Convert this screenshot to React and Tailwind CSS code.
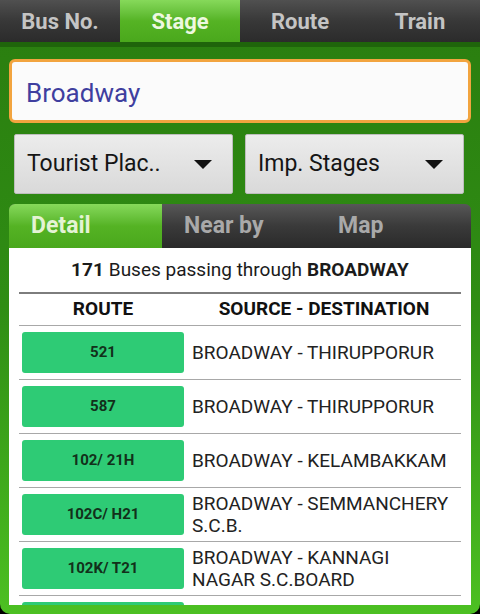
const topTabs = ['Bus No.', 'Stage', 'Route', 'Train']

const rows = [
  { route: '521', dest: 'BROADWAY - THIRUPPORUR' },
  { route: '587', dest: 'BROADWAY - THIRUPPORUR' },
  { route: '102/ 21H', dest: 'BROADWAY - KELAMBAKKAM' },
  { route: '102C/ H21', dest: 'BROADWAY - SEMMANCHERY S.C.B.' },
  { route: '102K/ T21', dest: 'BROADWAY - KANNAGI NAGAR S.C.BOARD' },
  // next row is only peeking out below the fold
  { route: '', dest: '' },
]

function Caret() {
  return (
    <svg width="18" height="9" viewBox="0 0 18 9" className="shrink-0">
      <path d="M0 0 L18 0 L9 9 Z" fill="#111" />
    </svg>
  )
}

function Dropdown({ label }) {
  return (
    <div className="w-[219px] h-[60px] flex items-center justify-between pl-3 pr-5 rounded-[2px] border border-[#bdbdbd] bg-gradient-to-b from-[#ececec] to-[#d9d9d9]">
      <span className="text-[23px] text-[#151515]">{label}</span>
      <Caret />
    </div>
  )
}

export default function App() {
  return (
    <div
      className="w-[480px] h-[614px] overflow-hidden bg-black"
      style={{ fontFamily: 'Roboto, "Noto Sans", sans-serif' }}
    >
      <div className="h-full flex flex-col rounded-b-[10px] overflow-hidden bg-gradient-to-b from-[#2a7d0f] via-[#2f8d14] to-[#4cc022]">
        {/* top tabs */}
        <div className="h-[42px] flex bg-gradient-to-b from-[#505050] via-[#383838] to-[#2b2b2b] shrink-0">
          {topTabs.map((t) => (
            <div
              key={t}
              className={
                t === 'Stage'
                  ? 'w-[120px] flex items-center justify-center text-[22px] font-bold text-[#eef8e0] bg-gradient-to-b from-[#86d95a] via-[#55b324] to-[#4aa81c]'
                  : 'w-[120px] flex items-center justify-center text-[22px] font-bold text-[#c4c4c4]'
              }
            >
              {t}
            </div>
          ))}
        </div>
        <div className="h-[5px] bg-[#1f640b] shrink-0" />

        {/* search */}
        <div className="px-[9px] pt-[12px]">
          <div className="h-[64px] rounded-[6px] border-[3px] border-[#f2a43f] bg-[#fbfbfb] flex items-center px-[14px] pt-[4px]">
            <span className="text-[26px] text-[#3f3f9f]">Broadway</span>
          </div>
        </div>

        {/* dropdowns */}
        <div className="flex gap-[12px] px-[14px] pt-[11px]">
          <Dropdown label="Tourist Plac.." />
          <Dropdown label="Imp. Stages" />
        </div>

        {/* inner panel */}
        <div className="flex-1 flex flex-col mx-[9px] mt-[10px] mb-[9px] rounded-t-[6px] overflow-hidden">
          <div className="h-[44px] flex bg-gradient-to-b from-[#575757] via-[#3a3a3a] to-[#2a2a2a] shrink-0">
            <div className="w-[153px] flex items-center pl-[22px] text-[23px] font-bold text-[#e4f3d4] bg-gradient-to-b from-[#86d95a] via-[#55b324] to-[#4aa81c]">
              Detail
            </div>
            <div className="w-[154px] flex items-center pl-[22px] text-[23px] font-bold text-[#a9a9a9]">
              Near by
            </div>
            <div className="flex-1 flex items-center pl-[22px] text-[23px] font-bold text-[#a9a9a9]">
              Map
            </div>
          </div>

          <div className="flex-1 bg-white px-[10px] overflow-hidden">
            <div className="h-[44px] flex items-center justify-center text-[19px] text-[#1b1b1b]">
              <span className="font-bold">171</span>
              <span className="ml-[5px]">Buses passing through</span>
              <span className="ml-[5px] font-bold">BROADWAY</span>
            </div>
            <div className="h-[2px] bg-[#7d7d7d]" />
            <div className="h-[31px] flex items-center text-[19px] font-bold text-[#111]">
              <div className="w-[168px] text-center">ROUTE</div>
              <div className="flex-1 text-center">SOURCE - DESTINATION</div>
            </div>
            {rows.map((r, i) => (
              <div key={i} className="border-t border-[#a8a8a8] h-[54px] flex items-start">
                <div className="mt-[6px] ml-[3px] w-[162px] h-[41px] shrink-0 rounded-[3px] bg-[#2ecb75] flex items-center justify-center text-[15px] font-bold text-[#12301a]">
                  {r.route}
                </div>
                <div className="flex-1 self-center pl-[8px] pr-[4px] text-[19px] leading-[22px] text-[#222]">
                  {r.dest}
                </div>
              </div>
            ))}
          </div>
        </div>
      </div>
    </div>
  )
}
